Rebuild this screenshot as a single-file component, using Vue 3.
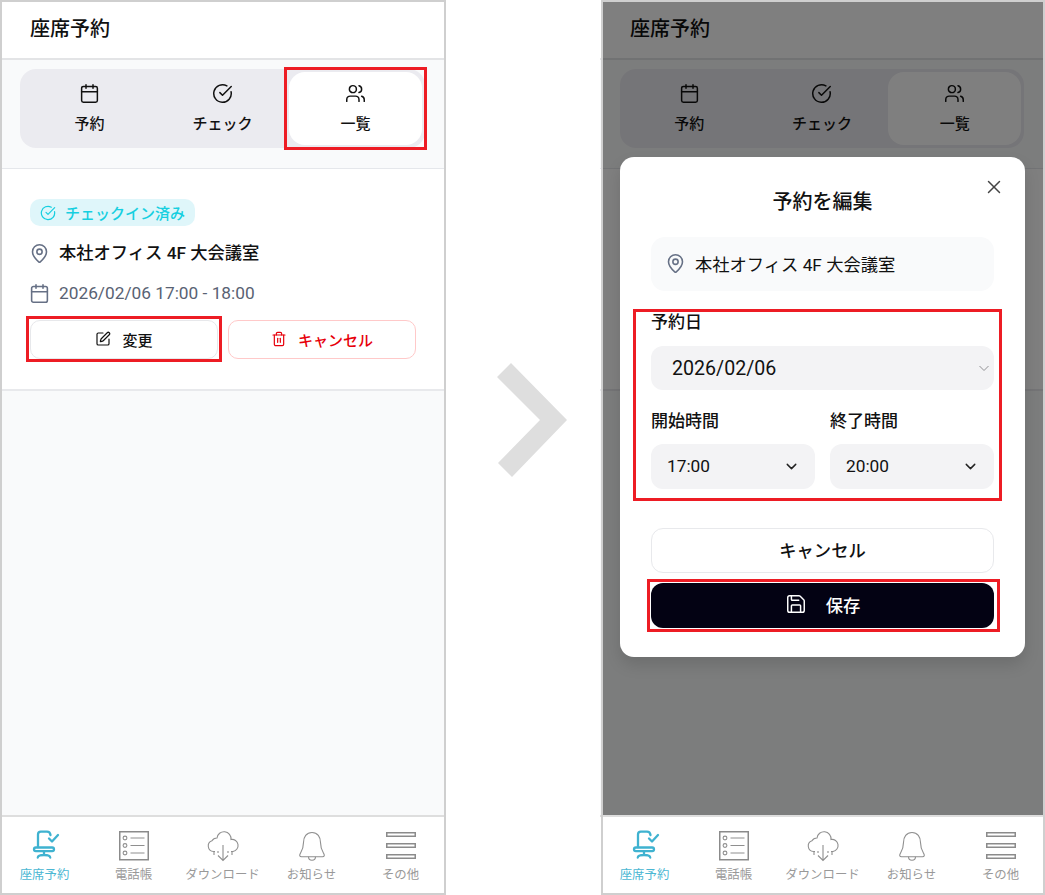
<script setup>
const phones = [{ id: 'list', modal: false }, { id: 'edit', modal: true }]
const navItems = ['座席予約', '電話帳', 'ダウンロード', 'お知らせ', 'その他']
</script>

<template>
  <div class="page">
    <template v-for="(phone, index) in phones" :key="phone.id">
      <section class="phone" :class="phone.id">
        <div class="main">
          <header class="header">座席予約</header>
          <div class="tabs-wrap">
            <div class="tabs">
              <div class="tab">
                <svg class="lucide tab-icon" viewBox="0 0 24 24"><path d="M8 2v4" /><path d="M16 2v4" /><rect width="18" height="18" x="3" y="4" rx="2" /><path d="M3 10h18" /></svg>
                <span>予約</span>
              </div>
              <div class="tab">
                <svg class="lucide tab-icon" viewBox="0 0 24 24"><path d="M21.801 10A10 10 0 1 1 17 3.335" /><path d="m9 11 3 3L22 4" /></svg>
                <span>チェック</span>
              </div>
              <div class="tab active">
                <svg class="lucide tab-icon" viewBox="0 0 24 24"><path d="M16 21v-2a4 4 0 0 0-4-4H6a4 4 0 0 0-4 4v2" /><circle cx="9" cy="7" r="4" /><path d="M22 21v-2a4 4 0 0 0-3-3.87" /><path d="M16 3.13a4 4 0 0 1 0 7.75" /></svg>
                <span>一覧</span>
              </div>
            </div>
          </div>
          <article class="card">
            <template v-if="!phone.modal">
              <div class="badge">
                <svg class="lucide badge-icon" viewBox="0 0 24 24"><path d="M21.801 10A10 10 0 1 1 17 3.335" /><path d="m9 11 3 3L22 4" /></svg>
                <span>チェックイン済み</span>
              </div>
              <div class="place">
                <svg class="lucide row-icon" viewBox="0 0 24 24"><path d="M20 10c0 4.993-5.539 10.193-7.399 11.799a1 1 0 0 1-1.202 0C9.539 20.193 4 14.993 4 10a8 8 0 0 1 16 0" /><circle cx="12" cy="10" r="3" /></svg>
                <span>本社オフィス 4F 大会議室</span>
              </div>
              <div class="when">
                <svg class="lucide row-icon" viewBox="0 0 24 24"><path d="M8 2v4" /><path d="M16 2v4" /><rect width="18" height="18" x="3" y="4" rx="2" /><path d="M3 10h18" /></svg>
                <span>2026/02/06 17:00 - 18:00</span>
              </div>
              <div class="actions">
                <div class="btn">
                  <svg class="lucide btn-icon" viewBox="0 0 24 24"><path d="M12 3H5a2 2 0 0 0-2 2v14a2 2 0 0 0 2 2h14a2 2 0 0 0 2-2v-7" /><path d="M18.375 2.625a1 1 0 0 1 3 3l-9.013 9.014a2 2 0 0 1-.853.505l-2.873.84a.5.5 0 0 1-.62-.62l.84-2.873a2 2 0 0 1 .506-.852z" /></svg>
                  <span>変更</span>
                </div>
                <div class="btn danger">
                  <svg class="lucide btn-icon" viewBox="0 0 24 24"><path d="M3 6h18" /><path d="M19 6v14c0 1-1 2-2 2H7c-1 0-2-1-2-2V6" /><path d="M8 6V4c0-1 1-2 2-2h4c1 0 2 1 2 2v2" /><line x1="10" x2="10" y1="11" y2="17" /><line x1="14" x2="14" y1="11" y2="17" /></svg>
                  <span>キャンセル</span>
                </div>
              </div>
            </template>
          </article>

          <div v-if="phone.modal" class="overlay">
            <div class="modal">
              <svg class="lucide close" viewBox="0 0 24 24"><path d="M18 6 6 18" /><path d="m6 6 12 12" /></svg>
              <h2 class="modal-title">予約を編集</h2>
              <div class="location">
                <svg class="lucide row-icon" viewBox="0 0 24 24"><path d="M20 10c0 4.993-5.539 10.193-7.399 11.799a1 1 0 0 1-1.202 0C9.539 20.193 4 14.993 4 10a8 8 0 0 1 16 0" /><circle cx="12" cy="10" r="3" /></svg>
                <span>本社オフィス 4F 大会議室</span>
              </div>
              <div class="field-label first">予約日</div>
              <div class="select date">
                <span>2026/02/06</span>
                <svg class="thin-chevron" viewBox="0 0 10 7"><path d="M.5 1 5 5.500 9.500 1" /></svg>
              </div>
              <div class="time-grid">
                <div>
                  <div class="field-label">開始時間</div>
                  <div class="select time">
                    <span>17:00</span>
                    <svg class="lucide chevron" viewBox="0 0 24 24"><path d="m6 9 6 6 6-6" /></svg>
                  </div>
                </div>
                <div>
                  <div class="field-label">終了時間</div>
                  <div class="select time">
                    <span>20:00</span>
                    <svg class="lucide chevron" viewBox="0 0 24 24"><path d="m6 9 6 6 6-6" /></svg>
                  </div>
                </div>
              </div>
              <div class="modal-btn outline">キャンセル</div>
              <div class="modal-btn primary">
                <svg class="lucide save-icon" viewBox="0 0 24 24"><path d="M15.2 3a2 2 0 0 1 1.4.6l3.8 3.8a2 2 0 0 1 .6 1.4V19a2 2 0 0 1-2 2H5a2 2 0 0 1-2-2V5a2 2 0 0 1 2-2z" /><path d="M17 21v-7a1 1 0 0 0-1-1H8a1 1 0 0 0-1 1v7" /><path d="M7 3v4a1 1 0 0 0 1 1h7" /></svg>
                <span>保存</span>
              </div>
            </div>
          </div>
        </div>

        <nav class="nav">
          <div v-for="(label, i) in navItems" :key="label" class="nav-item" :class="{ current: i === 0 }">
            <svg v-if="i === 0" class="nav-icon" viewBox="0 0 34 34">
              <path class="chair" d="M10 17V4.500Q10 1.700 12.800 1.700H19Q22 1.700 22.500 5" />
              <path class="chair" d="M21 8.500 24 11.500 30 5" />
              <rect class="chair" x="6" y="17.500" width="20" height="3.600" rx="1.800" />
              <path class="chair" d="M16 21.500V25M9.800 27.500Q10 25 16 25 22 25 22.200 27.500" />
            </svg>
            <svg v-else-if="i === 1" class="nav-icon" viewBox="0 0 34 34">
              <rect class="line" x="2.750" y="1.750" width="28.500" height="28" />
              <circle class="thin" cx="8" cy="8" r="1.900" /><circle class="thin" cx="8" cy="15.500" r="1.900" /><circle class="thin" cx="8" cy="23" r="1.900" />
              <path class="thin" d="M13.500 8H27.500M13.500 15.500H27.500M13.500 23H27.500" />
            </svg>
            <svg v-else-if="i === 2" class="nav-icon" viewBox="0 0 34 34">
              <path class="thin" d="M9 21.500H7.500A5.500 5.500 0 0 1 6 10.800 5.500 5.500 0 0 1 11 8 7 7 0 0 1 25 9.500 6 6 0 0 1 27 21.500H25" />
              <path class="thin" d="M17 15V30M12 25.500 17 30.500 22 25.500M8 22V25M26 22V25M12 21V23M22 21V23" />
            </svg>
            <svg v-else-if="i === 3" class="nav-icon" viewBox="0 0 34 34">
              <path class="thin" d="M17 2.500C11.500 2.500 8.500 7 8.500 12.500C8.500 19 6.500 21.500 5 24Q4 26.800 6.500 26.800H27.500Q30 26.800 29 24C27.500 21.500 25.500 19 25.500 12.500C25.500 7 22.500 2.500 17 2.500Z" />
              <path class="thin" d="M13.500 26.800A3.500 3.500 0 0 0 20.500 26.800" />
            </svg>
            <svg v-else class="nav-icon" viewBox="0 0 34 34">
              <rect class="line" x="2.750" y="2.750" width="28.500" height="3.500" />
              <rect class="line" x="2.750" y="13.750" width="28.500" height="3.500" />
              <rect class="line" x="2.750" y="24.750" width="28.500" height="3.500" />
            </svg>
            <span>{{ label }}</span>
          </div>
        </nav>

        <template v-if="phone.modal">
          <i class="mark mark-fields"></i>
          <i class="mark mark-save"></i>
        </template>
        <template v-else>
          <i class="mark mark-tab"></i>
          <i class="mark mark-change"></i>
        </template>
      </section>

      <div v-if="index === 0" class="arrow">
        <svg width="72" height="116" viewBox="0 0 72 116"><polygon points="1,15 15,1 71,58 16,115 2,101 44,58" fill="#dedede" /></svg>
      </div>
    </template>
  </div>
</template>

<style>
html, body { margin: 0; background: #fff; }
</style>

<style scoped>
.page {
  display: grid;
  grid-template-columns: 446px 154px 445px;
  width: 1045px;
  height: 895px;
  overflow: hidden;
  font-family: Roboto, "Noto Sans CJK JP", sans-serif;
  color: #111;
}
.phone {
  position: relative;
  display: flex;
  flex-direction: column;
  height: 895px;
  background: #f9fafb;
}
.phone::after {
  content: "";
  position: absolute;
  inset: 0;
  z-index: 4;
  border: 2px solid #cfcfcf;
  pointer-events: none;
}
.edit::after { left: 1px; }
.main { position: relative; flex: 1; min-height: 0; }
.header {
  display: flex;
  align-items: center;
  height: 60px;
  padding: 0 0 4px 30px;
  box-sizing: border-box;
  background: #fff;
  border-bottom: 2px solid #e3e4e6;
  font-size: 20px;
  font-weight: 500;
}
.tabs-wrap {
  padding: 9px 21px 20px 20px;
  border-bottom: 1px solid #e5e7eb;
}
.tabs {
  display: grid;
  grid-template-columns: repeat(3, 1fr);
  height: 79px;
  padding: 3px;
  box-sizing: border-box;
  border-radius: 16px;
  background: #ebebf0;
}
.tab {
  display: flex;
  flex-direction: column;
  align-items: center;
  padding-top: 11px;
  border-radius: 16px;
  font-size: 15px;
  font-weight: 500;
  line-height: 20px;
}
.tab.active { background: #fff; }
.lucide {
  fill: none;
  stroke: currentColor;
  stroke-width: 2;
  stroke-linecap: round;
  stroke-linejoin: round;
  flex: none;
}
.tab-icon { width: 21px; height: 21px; margin-bottom: 10px; stroke-width: 1.700; }
.card {
  display: flex;
  flex-direction: column;
  align-items: flex-start;
  height: 222px;
  box-sizing: border-box;
  padding: 30px 30px 0;
  background: #fff;
  border-bottom: 2px solid #e8e9ec;
}
.badge {
  display: flex;
  align-items: center;
  gap: 9px;
  height: 27px;
  padding: 0 10px 0 10px;
  border-radius: 10px;
  background: #dff6fa;
  color: #16cfe0;
  font-size: 15px;
  font-weight: 500;
}
.badge-icon { width: 16px; height: 16px; stroke-width: 1.800; }
.place, .when {
  display: flex;
  align-items: center;
  gap: 9px;
  margin-left: -1px;
  font-size: 17.300px;
  line-height: 24px;
}
.place { margin-top: 15px; font-weight: 500; color: #111; }
.when { margin-top: 16px; color: #596273; }
.row-icon { width: 21px; height: 21px; color: #667085; stroke-width: 1.800; }
.actions {
  display: grid;
  grid-template-columns: 188px 188px;
  gap: 10px;
  margin-top: 15px;
}
.btn {
  display: flex;
  align-items: center;
  justify-content: center;
  gap: 11px;
  height: 39px;
  padding-bottom: 1px;
  box-sizing: border-box;
  border: 1.500px solid #e7e8eb;
  border-radius: 10px;
  background: #fff;
  font-size: 15px;
  font-weight: 500;
}
.btn.danger { border-color: #ffc9c9; color: #e7000b; }
.btn-icon { width: 16px; height: 16px; stroke-width: 1.800; }
.overlay {
  position: absolute;
  inset: 0 0 0 1px;
  z-index: 2;
  display: flex;
  align-items: center;
  justify-content: center;
  padding-bottom: 1px;
  padding-right: 1px;
  box-sizing: border-box;
  background: rgba(0, 0, 0, 0.5);
}
.modal {
  position: relative;
  width: 405px;
  height: 500px;
  box-sizing: border-box;
  padding: 32px 31px 0;
  border-radius: 14px;
  background: #fff;
  box-shadow: 0 8px 16px rgba(0, 0, 0, 0.12);
}
.close {
  position: absolute;
  top: 19px;
  right: 20px;
  width: 22px;
  height: 22px;
  color: #444;
  stroke-width: 1.600;
}
.modal-title {
  margin: 0;
  height: 26px;
  text-align: center;
  font-size: 20px;
  font-weight: 500;
  line-height: 26px;
}
.location {
  display: flex;
  align-items: center;
  gap: 9px;
  height: 54px;
  margin-top: 22px;
  padding: 0 0 2px 14px;
  box-sizing: border-box;
  border-radius: 14px;
  background: #f9fafb;
  font-size: 17.300px;
}
.field-label { height: 26px; font-size: 17px; font-weight: 500; line-height: 24px; margin-bottom: 9px; }
.field-label.first { margin-top: 19px; margin-bottom: 10px; }
.select {
  display: flex;
  align-items: center;
  justify-content: space-between;
  height: 44px;
  padding: 0 16px;
  box-sizing: border-box;
  border-radius: 12px;
  background: #f3f3f5;
  font-size: 17.300px;
}
.select.time { height: 45px; padding: 0 15px 1px 16px; }
.select.date { padding: 0 5px 0 21px; font-size: 19.600px; }
.thin-chevron { width: 10px; height: 7px; fill: none; stroke: #909094; stroke-width: 1; }
.chevron { width: 17px; height: 17px; color: #222; }
.time-grid {
  display: grid;
  grid-template-columns: 164px 164px;
  gap: 15px;
  margin-top: 19px;
}
.modal-btn {
  display: flex;
  align-items: center;
  justify-content: center;
  height: 45px;
  padding-bottom: 3px;
  box-sizing: border-box;
  border-radius: 12px;
  font-size: 17.300px;
  font-weight: 500;
}
.outline { margin-top: 39px; border: 1.500px solid #e8e9ec; }
.primary { gap: 19px; margin-top: 10px; background: #030213; color: #fff; }
.save-icon { width: 22px; height: 22px; stroke-width: 1.600; }
.nav {
  display: grid;
  grid-template-columns: repeat(5, 89px);
  height: 80px;
  box-sizing: border-box;
  padding-top: 13px;
  background: #fff;
  border-top: 2px solid #dedede;
}
.nav-item {
  display: flex;
  flex-direction: column;
  align-items: center;
  font-size: 12.400px;
  line-height: 16px;
  color: #999;
  white-space: nowrap;
}
.nav-item.current { color: #4bb7d3; }
.nav-icon { width: 34px; height: 34px; margin-bottom: 3px; fill: none; }
.chair { stroke: #3fb2d0; stroke-width: 2.300; stroke-linecap: round; stroke-linejoin: round; }
.line { stroke: #8b8b8b; stroke-width: 1.500; }
.thin { stroke: #8f8f8f; stroke-width: 1.100; }
.mark {
  position: absolute;
  z-index: 5;
  box-sizing: border-box;
  border: 3px solid #ed1c24;
  pointer-events: none;
}
.mark-tab { left: 284px; top: 67px; width: 143px; height: 83px; }
.mark-change { left: 26px; top: 316px; width: 196px; height: 46px; }
.mark-fields { left: 33px; top: 309px; width: 369px; height: 192px; }
.mark-save { left: 47px; top: 579px; width: 353px; height: 53px; }
.arrow {
  display: flex;
  align-items: center;
  justify-content: center;
  padding: 0 0 55px 17px;
  box-sizing: border-box;
  height: 895px;
}
</style>
